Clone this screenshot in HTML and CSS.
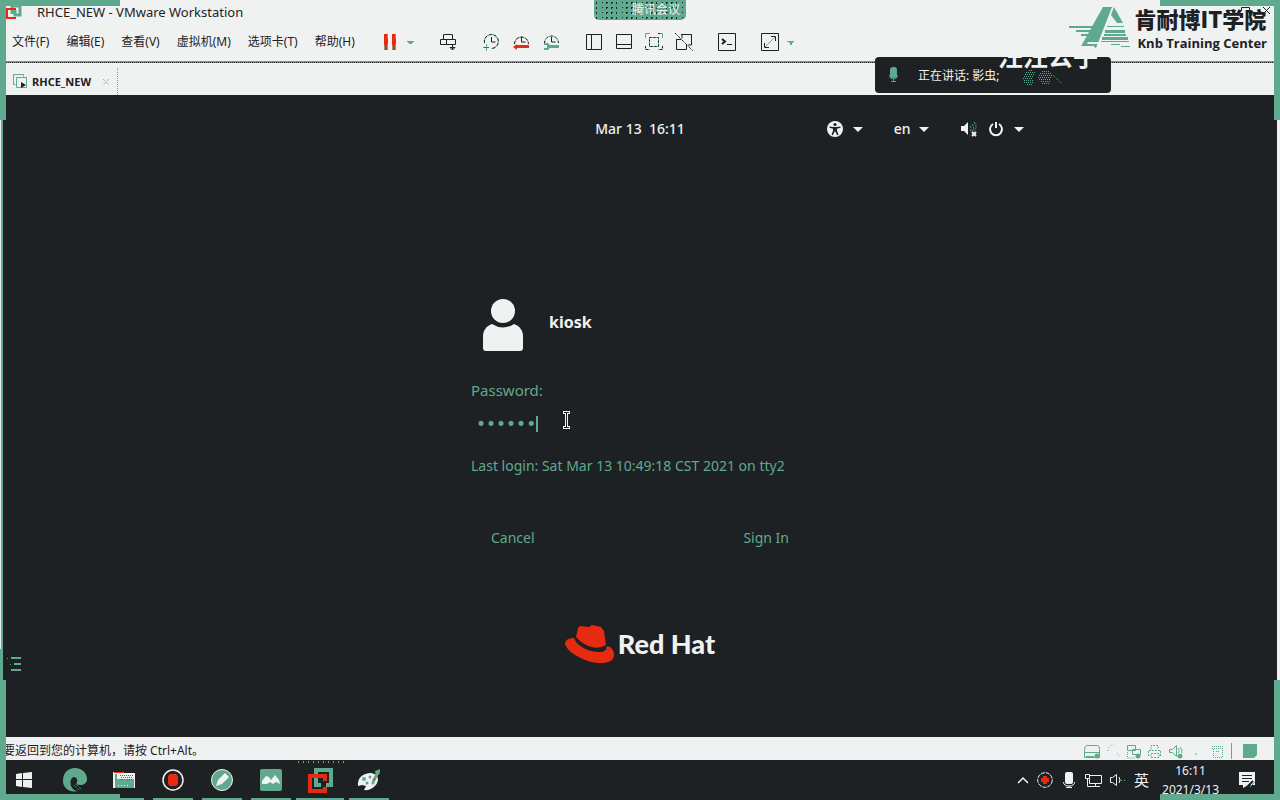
FILE: index.html
```html
<!DOCTYPE html>
<html lang="zh-CN">
<head>
<meta charset="utf-8">
<title>RHCE_NEW - VMware Workstation</title>
<link rel="stylesheet" href="styles.css">
</head>
<body>
<header class="titlebar">
  <svg class="app-icon" width="16" height="14" viewBox="0 0 16 14" fill="none" stroke-width="2"><path class="g" stroke-width="3" d="M6 9V1h8v9H9V5"/><path class="r" d="M10 4H1v9h9"/></svg>
  <h1>RHCE_NEW - VMware Workstation</h1>
</header>
<nav class="menubar">
  <div class="menus">
    <button>文件(F)</button><button>编辑(E)</button><button>查看(V)</button><button>虚拟机(M)</button><button>选项卡(T)</button><button>帮助(H)</button>
  </div>
  <div class="tools">
    <div class="pair">
      <button aria-label="Suspend"><svg width="20" height="20" viewBox="0 0 20 20"><path fill="#5faa8f" d="M4 2h4v16H4zM12 2h4v16h-4z"/><path fill="#e62b10" d="M4 2h3v5h1v5H7v6H5v-5H4zM12 2h3v5h1v5h-1v6h-2v-5h-1z"/></svg></button>
      <button aria-label="Power options"><svg width="10" height="20" viewBox="0 0 10 20"><path fill="#5faa8f" d="M2 9h7v1H8v1H7v1H4v-1H3v-1H2z"/></svg></button>
    </div>
    <button aria-label="Send Ctrl+Alt+Del"><svg width="20" height="20" viewBox="0 0 20 20" fill="none" stroke="#1e2124"><path d="M5.500 7.500v-5h9v5M2.500 7.500h15v5h-15zM8.500 7.500v5M14.500 12v6M12 15.500h5l-2.500 2.500z"/></svg></button>
    <div class="group">
      <button aria-label="Take snapshot"><svg width="20" height="20" viewBox="0 0 20 20" fill="none" stroke="#1e2124"><path stroke="#5faa8f" d="M3.500 11a7 7 0 1 1 7 5.500M5.500 12v7M2 15.500h4"/><path stroke-dasharray="3 2" d="M3.500 11a7 7 0 1 1 7 5.500"/><path d="M10.500 5v5h4"/><path stroke="#e62b10" d="M3 15.500h5"/></svg></button>
      <button aria-label="Revert snapshot"><svg width="20" height="20" viewBox="0 0 20 20" fill="none" stroke="#1e2124"><path stroke="#5faa8f" d="M3.500 12a7 7 0 1 1 14 0"/><path stroke-dasharray="3 2" d="M3.500 12a7 7 0 1 1 14 0"/><path d="M10.500 5v5h4"/><path fill="#e62b10" stroke="none" d="M2 15l4-3v1h12v3H6v2z"/></svg></button>
      <button aria-label="Manage snapshots"><svg width="20" height="20" viewBox="0 0 20 20" fill="none" stroke="#1e2124"><path stroke="#5faa8f" d="M3.500 11a7 7 0 1 1 14 0"/><path stroke-dasharray="2 3" d="M3.500 11a7 7 0 1 1 14 0"/><path d="M10.500 5v5h4"/><path fill="#5faa8f" stroke="none" d="M3 11h4l2 2h9v3H9l-2 2H3v-2h3v-3H3z"/></svg></button>
    </div>
    <div class="group">
      <button aria-label="Library"><svg width="20" height="20" viewBox="0 0 20 20" fill="none" stroke="#1e2124"><path d="M2.500 2.500h15v15h-15zM7.500 3v14"/></svg></button>
      <button aria-label="Thumbnail bar"><svg width="20" height="20" viewBox="0 0 20 20" fill="none" stroke="#1e2124"><path d="M2.500 2.500h15v14h-15zM3 12.500h14"/></svg></button>
      <button aria-label="Full screen"><svg width="20" height="20" viewBox="0 0 20 20" fill="none" stroke="#5faa8f"><path d="M1.500 6V1.500H6M14 1.500h4.500V6M18.500 14v3.500H14M6 17.500H1.500V14M5.500 5.500h9v9h-9z"/><path stroke="#1e2124" stroke-dasharray="2 2" d="M5.500 5.500h9v9h-9zM14 1.500h4M1.500 14v3.500H6M18.500 14v3.500H14"/></svg></button>
      <button aria-label="Unity"><svg width="20" height="20" viewBox="0 0 20 20" fill="none" stroke="#1e2124"><path d="M7 2.500h10.500V13H14M4 7.500H2.500v10h10V13M8 2.500v4M2.500 7.500H7"/><path stroke="#5faa8f" d="M1 1l18 18"/><path stroke-dasharray="2 3" d="M1 1l18 18"/></svg></button>
    </div>
    <button aria-label="Console view"><svg width="20" height="20" viewBox="0 0 20 20" fill="none" stroke="#1e2124"><path d="M1.500 1.500h17v17h-17zM10 12.500h5"/><path stroke-width="2" d="M5 7l3 2.500L5 12"/></svg></button>
    <div class="pair">
      <button aria-label="Stretch guest"><svg width="20" height="20" viewBox="0 0 20 20" fill="none" stroke="#1e2124"><path d="M1.500 1.500h17v17h-17zM11 4.500h4.500V9M4.500 11v4.500H9"/><path stroke="#5faa8f" d="M5 15L15 5"/></svg></button>
      <button aria-label="Stretch options"><svg width="10" height="20" viewBox="0 0 10 20"><path fill="#5faa8f" d="M2 9h7v1H8v1H7v2H5v-2H4v-1H2z"/></svg></button>
    </div>
  </div>
</nav>
<div class="tabs">
  <div class="tab">
    <svg width="15" height="15" viewBox="0 0 15 15" fill="none" stroke="#5faa8f"><path d="M2.500 10.500h-2v-10h10v2M3.500 3.500h10v10h-10z"/><path fill="#1e2124" stroke="none" d="M8 8l5 3-5 3z"/></svg>
    <span>RHCE_NEW</span>
    <button aria-label="Close tab"><svg width="8" height="8" viewBox="0 0 8 8" stroke="#5faa8f" stroke-dasharray="1 1"><path d="M1 1l6 6M7 1L1 7"/></svg></button>
  </div>
</div>
<main class="guest">
  <div class="guest-bar">
    <time>Mar 13&nbsp; 16:11</time>
    <div class="guest-menus">
      <button aria-label="Accessibility"><svg width="16" height="16" viewBox="0 0 16 16"><circle cx="8" cy="8" r="8" fill="#f0f2f1"/><g fill="#1e2124"><circle cx="8" cy="3.500" r="1.600"/><path d="M2.500 5.500l4 .5h3l4-.5v1.200l-3.500 1v2l1.500 4-1.300.6L8.300 10.500h-.6l-1.900 3.800-1.300-.6L6 9.700v-2l-3.500-1z"/></g></svg><i class="caret"></i></button>
      <button class="lang">en<i class="caret"></i></button>
      <button aria-label="System"><svg width="18" height="16" viewBox="0 0 18 16"><path fill="#f0f2f1" d="M1 5h3l4-4v13l-4-4H1z"/><path fill="none" stroke="#5faa8f" stroke-dasharray="2 1" d="M10 5q2 3 0 6M12 3q3 4 0 8M14 1q4 5 0 9"/><path stroke="#f0f2f1" stroke-width="2" d="M12 11l4 4M16 11l-4 4"/></svg><svg width="16" height="16" viewBox="0 0 16 16" fill="none" stroke="#f0f2f1" stroke-width="2"><path d="M5 3a6 6 0 1 0 6 0M8 1v6"/></svg><i class="caret"></i></button>
    </div>
  </div>
  <form class="login">
    <div class="user">
      <svg width="40" height="52" viewBox="0 0 40 52" fill="#f0f2f1"><circle cx="20" cy="12" r="12"/><path d="M9 25q11 7 22 0c6 2 9 7 9 12v12q0 3-3 3H3q-3 0-3-3V37c0-5 3-10 9-12z"/></svg>
      <strong>kiosk</strong>
    </div>
    <label for="password">Password:</label>
    <div class="field">
      <input id="password" type="password" value="kiosk1"><i class="text-caret"></i>
      <svg class="pointer" width="9" height="20" viewBox="0 0 9 20"><path fill="#f0f2f1" d="M1 1h7v3H6v12h2v3H1v-3h2V4H1z"/><path stroke="#1e2124" fill="none" d="M2 2.500h5M4.500 3v14M2 17.500h5"/></svg>
    </div>
    <p>Last login: Sat Mar 13 10:49:18 CST 2021 on tty2</p>
    <div class="actions"><button type="button">Cancel</button><button type="button">Sign In</button></div>
  </form>
  <div class="brand">
    <svg width="49" height="38" viewBox="0 0 49 38" fill="#e62b10"><path d="M13 3l2-2 9 1 3-2 9 2 3 4 2 14q-7 4-14 2-9-2-16-10z"/><path d="M9 13l2 4c5 6 14 10 23 10q8 0 8-6l3 1c5 4 5 9 2 13-5 4-15 4-24 1C12 32 2 26 0 19c0-4 4-6 9-6z"/></svg>
    <span>Red Hat</span>
  </div>
  <button class="side-toggle" aria-label="Library list"><svg width="14" height="14" viewBox="0 0 14 14" fill="#5faa8f"><path d="M4 0h10v2H4zM7 6h7v2H7zM4 12h10v2H4zM0 1h1v1H0zM3 7h1v1H3z"/></svg></button>
</main>
<div class="statusbar">
  <span>要返回到您的计算机，请按 Ctrl+Alt。</span>
  <div class="devices">
    <svg width="16" height="15" viewBox="0 0 16 15" fill="none" stroke="#5faa8f"><path d="M2.500 1.500h11q2 0 2 4v8H.500v-7q0-5 2-5zM1 8.500h14"/><path stroke-width="2" d="M2 13h8"/><circle cx="13" cy="12" r="2.500" fill="#5faa8f" stroke="none"/></svg>
    <svg width="16" height="15" viewBox="0 0 16 15" fill="none" stroke="#5faa8f" stroke-dasharray="1 2"><path d="M3 7q0-6 6-6M12 9l3 4"/></svg>
    <svg width="16" height="15" viewBox="0 0 16 15" fill="none" stroke="#5faa8f"><path d="M1.500 1.500h8v5h-8zM6.500 5.500h8v5h-8z"/><path stroke-dasharray="1 1" d="M1.500 8v6H9"/><circle cx="12" cy="12" r="2.500" fill="#5faa8f" stroke="none"/></svg>
    <svg width="16" height="15" viewBox="0 0 16 15" fill="none" stroke="#5faa8f" stroke-dasharray="2 1"><path d="M4 5.500V1.500h7v4M1.500 12V6.500h12V12M4 9.500h8v4H4z"/></svg>
    <svg width="16" height="15" viewBox="0 0 16 15" fill="none" stroke="#5faa8f"><path d="M1.500 5.500h3l4-4v11l-4-4h-3zM10 4q3 3 0 5M12 3q3 3 2 6"/><circle cx="12" cy="12" r="2.500" fill="#5faa8f" stroke="none"/></svg>
    <svg width="16" height="15" viewBox="0 0 16 15" fill="#5faa8f"><path d="M6 9h1v1H6zM7 10h1v1H7z"/></svg>
    <svg width="16" height="15" viewBox="0 0 16 15" fill="none" stroke="#5faa8f" stroke-dasharray="1 1"><path d="M2 2.500h12M2 4.500h12M3.500 5v8.500h9V5M6 7.500h4"/></svg>
    <i class="divider"></i>
    <svg width="14" height="14" viewBox="0 0 14 14" fill="#5faa8f"><path d="M0 0h14v11l-3 3H0z"/></svg>
  </div>
</div>
<footer class="taskbar">
  <div class="apps">
    <button aria-label="Start"><svg width="16" height="16" viewBox="0 0 16 16" fill="#f0f2f1"><path d="M0 2l6-1v6H0zM7 1l9-1v7H7zM0 8h6v7l-6-1zM7 8h9v8l-9-1z"/></svg></button>
    <button aria-label="Edge"><svg width="24" height="24" viewBox="0 0 24 24"><path fill="#5faa8f" d="M0 13C0 5 5 0 12 0s12 5 12 11c0 4-3 6-7 6-3 0-4-1-3-3 1-3-1-5-3-5-4 1-4 6-3 9s4 5 7 5C7 25 0 20 0 13z"/><path fill="none" stroke="#5faa8f" stroke-dasharray="1 1" d="M11 17l5 5M13 16l5 5"/></svg></button>
    <button class="open" aria-label="File Explorer"><svg width="22" height="18" viewBox="0 0 22 18"><path fill="#f0f2f1" d="M0 1h10l1 1h11v15H0z"/><path fill="#5faa8f" d="M4 8h17v9H2V3h2z"/><path fill="#e62b10" d="M1 1h9v1H1z"/><path stroke="#e62b10" stroke-width="1" stroke-dasharray="1 1" d="M7 4.500h13M8 6.500h12M7 8.500h3M14 8.500h5"/><path stroke="#f0f2f1" stroke-dasharray="1 2" d="M5 14.500h12"/></svg></button>
    <button class="open" aria-label="Recorder"><svg width="22" height="22" viewBox="0 0 22 22"><circle cx="11" cy="11" r="10" fill="none" stroke="#f0f2f1" stroke-width="1.500"/><path fill="#e62b10" d="M8 5h6l2 2v8l-2 2H8l-2-2V7z"/></svg></button>
    <button class="open" aria-label="Editor"><svg width="22" height="22" viewBox="0 0 22 22"><circle cx="11" cy="11" r="10.500" fill="#5faa8f" stroke="#f0f2f1"/><path fill="#f0f2f1" d="M5 17l2-6 7-7 4 4-7 7z"/></svg></button>
    <button class="open" aria-label="Meeting"><svg width="22" height="22" viewBox="0 0 22 22"><rect width="22" height="22" rx="2" fill="#5faa8f"/><path fill="#f0f2f1" d="M2 15v-3l4-5 3 1 2 3 4-5 4 5 1 4-4-2-3 2-3-2-3 2z"/></svg></button>
    <button class="open active" aria-label="VMware"><svg width="25" height="25" viewBox="0 0 25 25" fill="none" stroke-width="4"><path class="g" d="M8 16V2h15v15h-5M8 11v6h5"/><path class="r" d="M17 13V8H2v15h15v-4"/></svg></button>
    <button class="open" aria-label="Paint"><svg width="24" height="22" viewBox="0 0 24 22"><path fill="#f0f2f1" d="M1 17c-1-8 5-13 13-13 5 1 7 3 7 7-1 6-7 11-14 10l2-4-4-1z"/><g fill="#5faa8f"><circle cx="7" cy="10" r="2"/><circle cx="13" cy="8" r="1.500"/><circle cx="10" cy="14" r="1.500"/><circle cx="16" cy="14" r="1.500"/></g><path stroke="#5faa8f" stroke-width="3" d="M16 13l5-10"/><path fill="#5faa8f" d="M18 2l5-2v5l-4 1z"/><path fill="#e62b10" d="M22 3h1v2h-1zM17 9h1v2h-1z"/></svg></button>
  </div>
  <div class="tray">
    <svg width="12" height="8" viewBox="0 0 12 8" fill="none" stroke="#f0f2f1" stroke-width="1.500"><path d="M1 7l5-5 5 5"/></svg>
    <svg width="16" height="16" viewBox="0 0 16 16"><circle cx="8" cy="8" r="7.300" fill="none" stroke="#f0f2f1" stroke-dasharray="4 1"/><path fill="#e62b10" d="M6 4h4v2h2v4h-2v2H6v-2H4V6h2z"/></svg>
    <svg width="16" height="16" viewBox="-2 0 16 16" fill="none" stroke="#f0f2f1"><rect x="2" y="0" width="8" height="12" rx="2" fill="#f0f2f1" stroke="none"/><path d="M.500 10q0 4 5.500 4t5.500-4M6 14v2M3 15.500h6"/></svg>
    <svg width="17" height="15" viewBox="0 0 17 15" fill="none" stroke="#f0f2f1"><path d="M5 2.500h11.500v8H4.500V6M10.500 11v3M6 13.500h9M.500 1.500h4v4h-4zM2.500 6v7.500H6"/></svg>
    <svg width="16" height="12" viewBox="0 0 16 12" fill="none" stroke="#f0f2f1"><path d="M.500 3.500h2l4-3v11l-4-3h-2zM9 3q2 3 0 6"/><path stroke="#5faa8f" stroke-dasharray="1 2" d="M11 6.500h5"/></svg>
    <span class="ime">英</span>
    <time class="clock">16:11<br>2021/3/13</time>
    <button aria-label="Notifications"><svg width="17" height="16" viewBox="0 0 17 16"><path fill="#f0f2f1" d="M0 0h16v13H9l-5 3v-3H0z"/><path stroke="#1e2124" d="M3 3.500h10M3 6.500h10M3 9.500h7"/><path stroke="#1e2124" stroke-width="2" d="M9 14l5-5"/><path stroke="#5faa8f" d="M11 15l5-5"/></svg></button>
  </div>
</footer>

<div class="meeting-pill">腾讯会议</div>
<aside class="academy">
  <svg width="61" height="44" viewBox="0 0 61 44" fill="#5faa8f"><path d="M34 1h9L27 42H11z"/><path d="M45 1l9 16h-6l-6-8z"/><path d="M0 20h24v2H0zM7 24h15v2H7zM12 28h9v2h-9zM38 20h17v1H38zM36 24h20v3H36zM35 28h22v2H35zM33 31h26v3H33zM32 35h28v1H32zM42 38h9v1h-9zM52 40h9v1h-9z"/><path fill="#f0f2f1" d="M19 36h10v2H18z"/></svg>
  <div><b>肯耐博IT学院</b><span>Knb Training Center</span></div>
</aside>
<svg class="window-controls" width="54" height="16" viewBox="0 0 54 16" fill="none" stroke="#1e2124"><path d="M8 5.500h10M23.500 6V2.500h8V10M45 2l7 7M52 2l-7 7"/></svg>
<aside class="speaking">
  <svg width="12" height="16" viewBox="0 0 12 16" fill="none" stroke="#5faa8f"><rect x="2" y="0" width="7" height="11" rx="3" fill="#5faa8f" stroke="none"/><path d="M1.500 8q0 4 4 4t4-4M5.500 12v2M3 14.500h5"/></svg>
  <span>正在讲话: 影虫;</span>
  <svg class="smudge" width="40" height="18" viewBox="0 0 40 18" fill="none" stroke="#5faa8f" stroke-dasharray="1 1"><path d="M7 1.500h4M4 3.500h9M3 5.500h9M2 7.500h10M1 9.500h10M2 11.500h10M2 13.500h9M5 15.500h5M20 2.500h8M18 4.500h11M17 6.500h13M16 8.500h14M17 10.500h12M19 12.500h9M20 14.500h7M31 6l8 8"/></svg>
</aside>
<div class="watermark">汪汪公子</div>
<i class="corner tl"></i><i class="corner tr"></i><i class="corner bl"></i><i class="corner br"></i>
</body>
</html>
```

FILE: styles.css
```css
:root {
  --light: #f0f2f1;
  --dark: #1e2124;
  --green: #5faa8f;
  --red: #e62b10;
}
* { box-sizing: border-box; }
body {
  position: relative;
  display: flex;
  flex-direction: column;
  min-height: 100vh;
  margin: 0;
  overflow-x: hidden;
  background: var(--light);
  color: var(--dark);
  font: 12px/16px "Noto Sans", "Noto Sans CJK SC", sans-serif;
}
button {
  display: flex;
  align-items: center;
  padding: 0;
  border: 0;
  background: none;
  color: inherit;
  font: inherit;
}
svg { display: block; flex: none; }
.g { stroke: var(--green); }
.r { stroke: var(--red); }

.titlebar { display: flex; align-items: center; gap: 15px; height: 24px; padding-left: 6px; }
.titlebar h1 { margin: 0; font: 13px/16px "Noto Sans", sans-serif; }
.menubar {
  display: flex;
  align-items: center;
  gap: 25px;
  height: 39px;
  padding: 0 12px 4px;
  background:
    repeating-linear-gradient(90deg, var(--dark) 0 1px, var(--green) 1px 2px) 0 100% / 100% 1px no-repeat,
    linear-gradient(var(--green), var(--green)) 0 calc(100% - 1px) / 100% 1px no-repeat;
}
.menus { display: flex; gap: 17px; }
.tools { display: flex; gap: 23px; }
.group { display: flex; gap: 10px; }
.pair { display: flex; gap: 5px; }
.tabs { display: flex; align-items: flex-end; height: 32px; padding-left: 6px; }
.tab {
  display: flex;
  align-items: center;
  gap: 4px;
  width: 112px;
  height: 27px;
  padding-left: 7px;
  border-right: 1px dotted var(--green);
  font: bold 11px/16px "Noto Sans", sans-serif;
}
.tab button { margin-left: auto; margin-right: 7px; }

.guest {
  position: relative;
  display: flex;
  flex: 1;
  flex-direction: column;
  align-items: center;
  margin-right: 3px;
  border-left: 3px solid var(--green);
  background: var(--dark);
  color: var(--light);
}
.guest::before { content: ""; position: absolute; left: -3px; top: 0; width: 1px; height: 554px; background: var(--light); }
.guest-bar {
  display: grid;
  grid-template-columns: 1fr auto 1fr;
  align-items: center;
  width: 100%;
  height: 68px;
  font: 500 14px/20px "Noto Sans", sans-serif;
}
.guest-bar time { grid-column: 2; }
.guest-menus { display: flex; gap: 31px; padding-left: 142px; }
.guest-menus button { gap: 10px; }
.guest-menus .lang { gap: 8px; }
.caret { border: 5px solid transparent; border-top-color: var(--light); border-bottom: 0; }
.login { display: flex; flex-direction: column; width: 338px; padding-top: 136px; }
.user { display: flex; align-items: center; gap: 26px; padding-left: 12px; }
.user strong { padding-bottom: 6px; font: bold 16px/24px "Noto Sans", sans-serif; }
.login label { margin-top: 27px; color: var(--green); font: 15px/24px "Noto Sans", sans-serif; }
.field { position: relative; display: flex; align-items: center; height: 28px; margin-top: 8px; padding-left: 5px; }
.field input {
  width: 60px;
  height: 24px;
  padding: 0;
  border: 0;
  outline: 0;
  background: none;
  color: var(--green);
  font: 17px/24px "DejaVu Sans", sans-serif;
}
.text-caret { width: 2px; height: 16px; background: var(--green); }
.pointer { position: absolute; left: 91px; top: 0; }
.login p { margin: 16px 0 0; color: var(--green); font: 14px/24px "Noto Sans", sans-serif; }
.actions { display: flex; justify-content: space-between; margin-top: 48px; padding: 0 20px; color: var(--green); font: 14px/24px "Noto Sans", sans-serif; }
.brand { display: flex; align-items: center; gap: 4px; margin: 75px 0 73px; }
.brand span { font: 900 27px/36px Lato, sans-serif; }
.side-toggle { position: absolute; left: 4px; bottom: 66px; }

.statusbar { display: flex; align-items: center; justify-content: space-between; height: 23px; padding: 5px 23px 0 3px; }
.devices { display: flex; align-items: center; gap: 5px; }
.divider { width: 1px; height: 16px; margin-right: 6px; background: var(--green); }

.taskbar { display: flex; justify-content: space-between; height: 40px; background: var(--dark); color: var(--light); }
.apps { display: flex; gap: 9px; }
.apps button { justify-content: center; width: 40px; height: 40px; padding-top: 2px; border-bottom: 2px solid transparent; }
.apps button:first-child { width: 46px; padding-left: 2px; }
.apps .open { border-bottom-color: var(--green); }
.apps .active {
  width: 48px;
  margin: 0 -4px;
  background: radial-gradient(circle, var(--green) 0 1px, transparent 1px) 0 0 / 5px 4px repeat-x;
}
.tray { display: flex; align-items: center; gap: 8px; padding-right: 24px; }
.ime { font: 15px/20px "Noto Sans CJK SC", sans-serif; }
.clock { margin-left: 5px; font: 12px/19px "Noto Sans", sans-serif; text-align: center; }
.tray button { margin-left: 12px; }

.meeting-pill {
  position: absolute;
  left: calc(50% - 46px);
  top: 0;
  width: 92px;
  height: 20px;
  padding: 2px 6px 0 0;
  border-radius: 0 0 5px 5px;
  background: conic-gradient(var(--dark) 0 25%, transparent 0) -2px 1px / 4px 4px var(--green);
  background: linear-gradient(var(--dark), var(--dark)) 0 0 / 0 0, repeating-linear-gradient(90deg, transparent 0 3px, var(--green) 3px 4px), radial-gradient(circle, var(--dark) 0 1px, transparent 1px) 0 0 / 5px 5px, var(--green);
  color: var(--light);
  text-align: right;
}
.academy { position: absolute; right: 13px; top: 6px; display: flex; gap: 4px; }
.academy b { display: block; font: 900 22px/25px "Noto Sans CJK SC", sans-serif; }
.academy span { display: block; padding-left: 3px; font: bold 13px/24px "Open Sans", sans-serif; }
.window-controls { position: absolute; right: 8px; top: 5px; }
.speaking {
  position: absolute;
  right: 169px;
  top: 57px;
  display: flex;
  align-items: center;
  width: 236px;
  height: 36px;
  padding-left: 13px;
  border-radius: 4px;
  background: var(--dark);
  color: var(--light);
}
.speaking span { margin: 2px 0 0 18px; }
.smudge { position: absolute; left: 147px; top: 12px; }
.watermark { position: absolute; right: 182px; top: 40px; color: var(--light); font: bold 25px/30px "Noto Sans CJK SC", sans-serif; }
.corner { position: absolute; width: 120px; height: 120px; border: 0 solid var(--green); pointer-events: none; }
.tl { left: 0; top: 0; border-width: 6px 0 0 6px; }
.tr { right: 0; top: 0; border-width: 6px 6px 0 0; }
.bl { left: 0; bottom: 0; border-width: 0 0 6px 6px; }
.br { right: 0; bottom: 0; border-width: 0 6px 6px 0; }
```
